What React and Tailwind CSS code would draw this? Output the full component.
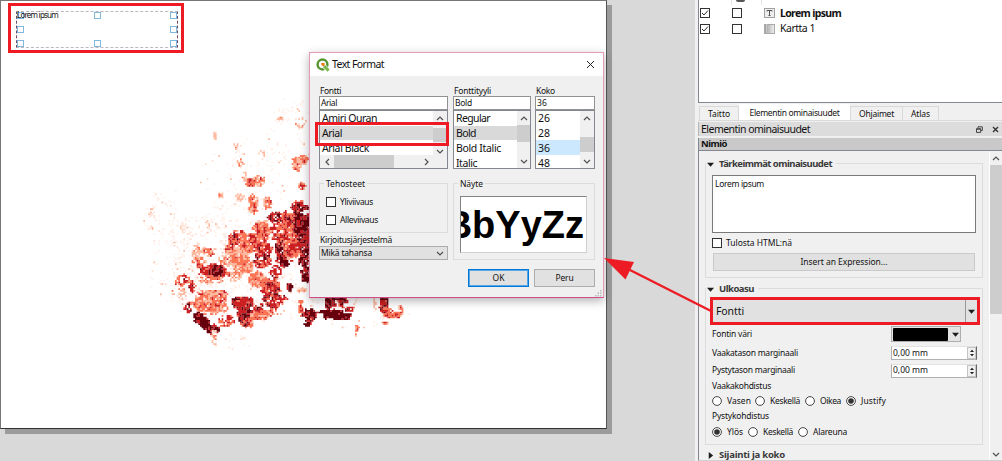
import { useLayoutEffect, useRef, useState } from "react";

// Text run whose tracking is adjusted so that it spans `w` pixels.
function T({ w, className = "", children }) {
  const ref = useRef(null);
  const [ls, setLs] = useState(0);
  useLayoutEffect(() => {
    const n = String(children).length;
    const natural = ref.current.getBoundingClientRect().width;
    setLs((w - natural) / n);
  }, []);
  return (
    <span ref={ref} className={"inline-block whitespace-pre " + className} style={{ letterSpacing: ls + "px" }}>
      {children}
    </span>
  );
}

// [cx, cy, rx, ry, density, darkness, tilt]
const CLUSTERS = [
  [298, 109, 2, 2, 0.6, 2], [280, 119, 2, 2, 0.9, 2], [300, 123, 5, 6, 0.45, 2], [215, 136, 1, 5, 1, 2],
  [236, 147, 2, 3, 0.8, 2], [262, 154, 3, 4, 0.6, 2], [240, 163, 4, 4, 0.7, 2.8], [302, 160, 8, 4, 1, 2.8],
  [297, 166, 4, 5, 0.9, 2.9], [252, 183, 6, 4, 1, 3.6], [259, 181, 5, 5, 0.8, 2.6], [245, 177, 2, 4, 0.7, 2.5],
  [302, 186, 3, 3, 0.9, 3.3], [253, 204, 4, 11, 0.9, 3.1], [268, 202, 3, 7, 0.9, 3.1], [240, 197, 5, 3, 0.7, 2],
  [221, 196, 2, 3, 0.8, 2], [300, 207, 8, 5, 0.85, 4.6], [298, 221, 6, 11, 0.95, 5], [307, 225, 4, 12, 0.9, 4.6],
  [277, 217, 8, 5, 0.85, 4.6], [288, 220, 6, 8, 0.85, 3.8], [262, 229, 8, 8, 0.97, 3], [251, 237, 6, 4, 0.8, 3.5],
  [237, 236, 8, 5, 0.8, 3.9, -0.5], [152, 213, 3, 3, 0.6, 1.9], [152, 229, 2, 2, 0.7, 2], [183, 229, 1.5, 5, 0.6, 1.6],
  [207, 225, 2, 2, 0.7, 2], [235, 245, 12, 6, 0.8, 3.5, -0.8], [253, 243, 16, 7, 0.9, 3.4, -0.5],
  [282, 250, 6, 16, 0.9, 4.7], [293, 245, 9, 14, 0.9, 3.5], [280, 232, 8, 10, 0.75, 3.8], [303, 230, 7, 14, 0.9, 4.9],
  [306, 245, 6, 13, 0.9, 4.7], [233, 257, 13, 7, 0.85, 2.7, -0.4], [243, 265, 11, 8, 0.9, 3], [240, 256, 9, 5, 0.85, 2.4],
  [263, 260, 8, 7, 0.85, 4.1], [263, 248, 9, 5, 0.85, 3.8], [197, 252, 4, 8, 0.8, 2.1], [208, 252, 9, 3, 0.7, 3],
  [200, 263, 7, 5, 0.8, 3], [213, 272, 12, 7, 0.95, 4.1], [217, 271, 7, 6, 0.95, 4.8], [212, 280, 11, 4, 0.6, 3],
  [234, 276, 7, 5, 0.8, 2.8], [182, 280, 6, 5, 0.8, 3.9, -0.6], [192, 287, 3, 5, 0.8, 4], [178, 292, 9, 3, 0.6, 2.3],
  [257, 280, 7, 8, 0.95, 3.1], [270, 287, 10, 9, 0.9, 3.9], [276, 273, 5, 6, 0.85, 4.4], [285, 263, 4, 3, 0.95, 5],
  [303, 260, 5, 5, 0.85, 4.8], [306, 274, 4, 8, 0.9, 5], [290, 287, 3, 3, 0.95, 5], [283, 299, 4, 4, 0.7, 4],
  [302, 290, 4, 2, 0.9, 2], [213, 294, 12, 4, 0.9, 3.7], [212, 302, 16, 11, 0.92, 3], [202, 304, 12, 3, 0.8, 3.3],
  [188, 307, 3, 5, 0.8, 4.2], [183, 299, 5, 6, 0.5, 1.9], [242, 302, 10, 6, 0.95, 4.4], [245, 316, 7, 9, 0.95, 4.7],
  [248, 323, 6, 4, 0.8, 3.5], [265, 309, 15, 5, 0.85, 4, -0.3], [262, 315, 14, 4, 0.9, 3.2, -0.2],
  [271, 298, 9, 6, 0.8, 4], [202, 321, 10, 5, 0.98, 5.2, 0.9], [212, 329, 6, 4, 0.95, 5], [227, 321, 7, 5, 0.85, 3.7],
  [215, 338, 3, 7, 0.7, 2.1], [233, 345, 15, 9, 0.25, 0.6], [301, 308, 2, 9, 0.9, 3.6], [310, 315, 7, 5, 0.98, 5],
  [308, 322, 4, 3, 0.9, 4.8], [330, 302, 5, 7, 0.98, 5.1], [335, 315, 14, 4.5, 0.97, 5.2, 0.1], [343, 302, 5, 5, 0.85, 4.2],
  [350, 309, 5, 2, 0.8, 4], [384, 303, 4, 9, 0.95, 4.4], [387, 312, 4, 4, 0.95, 4], [394, 315, 8, 3, 0.9, 3.4],
  [401, 310, 2, 6, 0.7, 2.8], [374, 303, 2, 4, 0.8, 2.2], [357, 330, 2, 5, 0.7, 2.5], [385, 323, 3, 1, 0.9, 3],
];
const HALOS = [
  [250, 200, 60, 60, 0.03], [165, 240, 25, 55, 0.045], [290, 130, 25, 35, 0.07], [245, 160, 35, 22, 0.04],
  [160, 215, 20, 20, 0.06], [240, 260, 75, 65, 0.1], [345, 312, 65, 18, 0.04], [195, 265, 50, 50, 0.06],
];
const SHADES = ["#fff1eb", "#fee0d4", "#fcbba1", "#fb7555", "#cb1f22", "#67000d"];
const CELL = 1.6667;

function noise(a, b) {
  const s = Math.sin(a * 127.1 + b * 311.7) * 43758.5453;
  return s - Math.floor(s);
}

function buildCells() {
  const cells = new Map();
  const place = (cx, cy, rx, ry, fn) => {
    const r = Math.max(rx, ry);
    for (let i = Math.floor((cx - r) / CELL); i <= (cx + r) / CELL; i++) {
      for (let j = Math.floor((cy - r) / CELL); j <= (cy + r) / CELL; j++) fn(i, j);
    }
  };
  HALOS.forEach(([cx, cy, rx, ry, d], k) =>
    place(cx, cy, rx, ry, (i, j) => {
      const u = (i * CELL - cx) / rx, v = (j * CELL - cy) / ry;
      const patch = noise((i >> 2) + 7, (j >> 2) + k * 5);
      if (u * u + v * v < 1 && noise(i + k * 31, j) < d * (patch > 0.72 ? 3.2 : 0.25))
        cells.set(i + "," + j, noise(j, i) < 0.78 ? 0 : 1 + (noise(i, j + 9) > 0.6 ? 1 : 0));
    })
  );
  CLUSTERS.forEach(([cx, cy, rx, ry, d, dark, tilt = 0], k) =>
    place(cx, cy, rx + 2, ry + 2, (i, j) => {
      const x = (i + 0.5) * CELL - cx, y = (j + 0.5) * CELL - cy;
      const u = (x * Math.cos(tilt) + y * Math.sin(tilt)) / (rx + 0.7);
      const v = (-x * Math.sin(tilt) + y * Math.cos(tilt)) / (ry + 0.7);
      const q = u * u + v * v;
      if (q > 0.6 + noise((i >> 1) + k, j >> 1) * 0.85) return;
      if (noise(i + k, j + 3) > d + 0.04 || noise((i >> 1) + 50, j >> 1) > d + 0.1) return;
      const n = dark + (noise(i, j) - 0.5) * 1.2 + (noise(i >> 1, (j >> 1) + 4) - 0.5) * 1.3 - q * 0.4;
      cells.set(i + "," + j, Math.max(0, Math.min(5, Math.round(n))));
    })
  );
  const paths = SHADES.map(() => "");
  cells.forEach((s, key) => {
    const [i, j] = key.split(",").map(Number);
    paths[s] += `M${(i * CELL).toFixed(2)} ${(j * CELL).toFixed(2)}h1.68v1.68h-1.68z`;
  });
  return paths;
}
const PATHS = buildCells();

function HeatMap() {
  return (
    <svg className="block" width="605" height="426" viewBox="1 1 605 426">
      {PATHS.map((d, i) => <path key={i} d={d} fill={SHADES[i]} />)}
    </svg>
  );
}

const Chevron = ({ dir, className = "" }) => {
  const d = { up: "M1 6L4 3L7 6", down: "M1 3L4 6L7 3", left: "M6 1L3 4L6 7", right: "M3 1L6 4L3 7" }[dir];
  return (
    <svg width="8" height="8" viewBox="0 0 8 8" className={"shrink-0 " + className}>
      <path d={d} fill="none" stroke="#505050" strokeWidth="1.2" />
    </svg>
  );
};

const Check = ({ on }) => (
  <span className="flex h-[10px] w-[10px] shrink-0 items-center justify-center border border-[#333] bg-white">
    {on && <svg width="8" height="8" viewBox="0 0 8 8"><path d="M1 4L3 6L7 1.5" fill="none" stroke="#333" strokeWidth="1" /></svg>}
  </span>
);

const Radio = ({ on, w, label, className }) => (
  <span className={"flex items-center gap-[5px] " + className}>
    <svg width="10" height="10" viewBox="0 0 10 10" className="shrink-0">
      <circle cx="5" cy="5" r="4.4" fill="#fff" stroke="#333" strokeWidth="0.9" />
      {on && <circle cx="5" cy="5" r="2.8" fill="#333" />}
    </svg>
    <T w={w}>{label}</T>
  </span>
);

const Tri = ({ dir = "down", size = 7 }) => (
  <svg width={size} height={size} viewBox="0 0 8 8" className="shrink-0">
    <path d={dir === "down" ? "M0 2H8L4 6.5Z" : dir === "up" ? "M0 6H8L4 1.5Z" : "M2 0L7 4L2 8Z"} fill="#1c1c1c" />
  </svg>
);

const Spin = () => (
  <div className="flex h-[14px] w-[86px] items-center border border-[#b0b0b0] border-t-[#e2e2e2] border-r-[#666] bg-white pl-px">
    <T w={35}>0,00 mm</T>
    <span className="ml-auto flex h-full w-[9px] flex-col items-center justify-between border border-[#c4c4c4] bg-[#f0f0f0] py-px">
      <Tri dir="up" size={4} />
      <Tri size={4} />
    </span>
  </div>
);

function Selection() {
  const row = "flex justify-between";
  const h = "h-[7px] w-[7px] border border-[#7fb9de] bg-white";
  return (
    <div className="absolute left-[8px] top-[3px] h-[50px] w-[176px] border-[3px] border-[#ed1c24]">
      <div className="relative ml-[5px] mt-[5px] flex h-[37px] w-[162px] flex-col justify-between border border-dashed border-x-[#6d4a68] border-y-[#bdb6c0]">
        <div className={row}><i className={h} /><i className={h} /><i className={h} /></div>
        <div className={row}><i className={h} /><i className={h} /></div>
        <div className={row}><i className={h} /><i className={h} /><i className={h} /></div>
        <span className="absolute left-0 top-[-3px] text-[8px] leading-[12px]"><T w={41}>Lorem ipsum</T></span>
      </div>
    </div>
  );
}

function ListRow({ w, children, className = "" }) {
  return <div className={"flex h-[14.7px] shrink-0 items-center pl-[2px] pt-[2px] text-[10.5px] " + className}><T w={w}>{children}</T></div>;
}

function Column({ label, lw, value, vw, className, children }) {
  return (
    <div className={"flex flex-col " + className}>
      <div className="flex h-[11px] items-center pl-px pt-[2px]"><T w={lw}>{label}</T></div>
      <div className="flex h-[14px] items-center border border-[#929292] bg-white pl-px pt-px"><T w={vw}>{value}</T></div>
      <div className="flex h-[59px] overflow-hidden border border-[#828790] bg-white">{children}</div>
    </div>
  );
}

const Group = ({ title, w, className, children }) => (
  <fieldset className={"border border-[#dcdcdc] " + className}>
    <legend className="ml-[4px] h-[11px] px-[2px] leading-[11px]"><T w={w}>{title}</T></legend>
    {children}
  </fieldset>
);

function Dialog() {
  return (
    <div className="absolute left-[309px] top-[52px] flex h-[246px] w-[295px] flex-col border border-[#e59ab9] border-b-[#d04a87] bg-[#f0f0f0] text-[8.5px] shadow-[0_3px_9px_rgba(0,0,0,0.3)]">
      <div className="flex h-[23px] shrink-0 items-center bg-white pl-[6px] pr-[8px]">
        <svg width="14" height="14" viewBox="0 0 14 14">
          <circle cx="6.5" cy="6.5" r="4.9" fill="none" stroke="#589632" strokeWidth="2.5" />
          <path d="M6.8 6.8L12.7 12.9" stroke="#fff" strokeWidth="4.2" />
          <path d="M8 8L12.6 12.6" stroke="#7bb84a" strokeWidth="3" />
          <path d="M5.3 5h3.3v2.3l-1.3 1.1L5.3 6.8z" fill="#ee7913" />
        </svg>
        <T w={52} className="ml-[2px] text-[10.5px]">Text Format</T>
        <svg className="ml-auto" width="9" height="9" viewBox="0 0 9 9"><path d="M1 1L8 8M8 1L1 8" stroke="#222" strokeWidth="1" /></svg>
      </div>
      <div className="flex pl-[9px] pt-[9px]">
        <Column label="Fontti" lw={21} value="Arial" vw={16} className="w-[129px]">
          <div className="flex w-full flex-col">
            <div className="flex h-[44px] overflow-hidden">
              <div className="flex flex-1 flex-col">
                <ListRow w={55}>Amiri Quran</ListRow>
                <ListRow w={20} className="bg-[#d9d9d9]">Arial</ListRow>
                <ListRow w={47}>Arial Black</ListRow>
              </div>
              <div className="flex w-[14px] flex-col items-center justify-between bg-[#f0f0f0]">
                <Chevron dir="up" className="mt-[3px]" />
                <span className="h-[14px] w-full bg-[#cdcdcd]" />
                <Chevron dir="down" />
              </div>
            </div>
            <div className="flex flex-1 items-center bg-[#f0f0f0] pl-[3px]">
              <Chevron dir="left" />
              <span className="ml-[3px] h-full w-[60px] bg-[#cdcdcd]" />
              <Chevron dir="right" className="ml-[28px]" />
            </div>
          </div>
        </Column>
        <Column label="Fonttityyli" lw={37} value="Bold" vw={17} className="ml-[5px] w-[78px]">
          <div className="flex flex-1 flex-col">
            <ListRow w={34}>Regular</ListRow>
            <ListRow w={20} className="bg-[#d9d9d9]">Bold</ListRow>
            <ListRow w={45}>Bold Italic</ListRow>
            <ListRow w={21}>Italic</ListRow>
          </div>
          <div className="flex w-[13px] flex-col items-center bg-[#f0f0f0]">
            <Chevron dir="up" className="mt-[3px]" />
            <span className="mt-[3px] h-[17px] w-full bg-[#cdcdcd]" />
            <Chevron dir="down" className="mb-[3px] mt-auto" />
          </div>
        </Column>
        <Column label="Koko" lw={19} value="36" vw={10} className="ml-[4px] w-[60px]">
          <div className="flex flex-1 flex-col">
            <ListRow w={12}>26</ListRow>
            <ListRow w={12}>28</ListRow>
            <ListRow w={12} className="bg-[#cce8ff]">36</ListRow>
            <ListRow w={12}>48</ListRow>
          </div>
          <div className="flex w-[14px] flex-col items-center bg-[#f0f0f0]">
            <Chevron dir="up" className="mt-[3px]" />
            <span className="mt-[15px] h-[15px] w-full bg-[#cdcdcd]" />
            <Chevron dir="down" className="mb-[3px] mt-auto" />
          </div>
        </Column>
      </div>
      <div className="flex pl-[9px] pt-[9px]">
        <div className="w-[129px]">
          <Group title="Tehosteet" w={39} className="h-[55px]">
            <div className="ml-[6px] mt-[8px] flex h-[10px] items-center gap-[4px]"><Check /><T w={33} className="mt-px">Yliviivaus</T></div>
            <div className="ml-[6px] mt-[8px] flex h-[10px] items-center gap-[4px]"><Check /><T w={38} className="mt-px">Alleviivaus</T></div>
          </Group>
          <div className="flex h-[13px] items-center pl-px pt-[2px]"><T w={72}>Kirjoitusjärjestelmä</T></div>
          <div className="flex h-[14px] items-center justify-between border border-[#adadad] bg-[#e1e1e1] pl-[1px] pr-[3px]">
            <T w={51}>Mikä tahansa</T>
            <Chevron dir="down" />
          </div>
        </div>
        <Group title="Näyte" w={23} className="ml-[5px] h-[82px] w-[142px]">
          <div className="ml-[6px] mt-[7px] flex h-[57px] w-[127px] items-center justify-end overflow-hidden border border-[#d0d0d0] border-l-[#828282] border-t-[#828282] bg-white pr-[2px] text-[38px] font-bold leading-none text-black [font-family:'Liberation_Sans',Arial,sans-serif]">
            BbYyZz
          </div>
        </Group>
      </div>
      <div className="mt-[9px] flex gap-[5px] pl-[158px]">
        <div className="flex h-[18px] w-[61px] items-center justify-center border border-[#0078d7] bg-[#e1e1e1] pt-px outline-1 -outline-offset-2 outline-[#55a7e8]"><T w={12}>OK</T></div>
        <div className="flex h-[18px] w-[61px] items-center justify-center border border-[#adadad] bg-[#e1e1e1] pt-px"><T w={18}>Peru</T></div>
      </div>
      <svg className="ml-auto mr-[1px] mt-auto" width="7" height="7" viewBox="0 0 7 7">
        <path d="M5 0h1.5v1.5H5zM2.5 2.5H4V4H2.5zM5 2.5h1.5V4H5zM0 5h1.5v1.5H0zM2.5 5H4v1.5H2.5zM5 5h1.5v1.5H5z" fill="#b8b8b8" />
      </svg>
      <div className="absolute left-[5px] top-[69px] h-[24px] w-[134px] border-[3px] border-[#ed1c24]" />
    </div>
  );
}

function Items() {
  return (
    <div className="h-[103px] shrink-0 border-b border-l border-[#828790] bg-white text-[10.5px]">
      <div className="flex h-[5px] items-start pl-[32px]">
        <div className="flex h-full w-[31px] justify-center border-x border-[#e5e5e5]"><span className="mr-[12px] h-[2px] w-[9px] rounded-b bg-[#555]" /></div>
      </div>
      <div className="flex h-[16px] items-center pl-[1px]">
        <Check on /><span className="w-[22px]" /><Check />
        <svg className="ml-[22px]" width="11" height="10" viewBox="0 0 11 10">
          <rect x=".5" y=".5" width="10" height="9" fill="#eee" stroke="#a0a0a0" />
          <path d="M3 3.5V2.5H8V3.5M5.5 2.5V7.5M4.5 7.5H6.5" fill="none" stroke="#555" />
        </svg>
        <T w={61} className="ml-[5px] mt-px font-bold">Lorem ipsum</T>
      </div>
      <div className="flex h-[16px] items-center pl-[1px]">
        <Check on /><span className="w-[22px]" /><Check />
        <svg className="ml-[22px]" width="11" height="10" viewBox="0 0 11 10">
          <defs><linearGradient id="sheet"><stop stopColor="#999" /><stop offset="1" stopColor="#f2f2f2" /></linearGradient></defs>
          <rect x=".5" y=".5" width="10" height="9" fill="url(#sheet)" stroke="#aaa" />
          <path d="M2.5 0V9" stroke="#c9c9c9" />
        </svg>
        <T w={35} className="ml-[5px]">Kartta 1</T>
      </div>
    </div>
  );
}

const Heading = ({ dir, w, children }) => (
  <div className="flex h-[14px] items-center">
    <span className="flex items-center gap-[5px] bg-[#f0f0f0] pl-[1px] pr-[4px]">
      <Tri dir={dir} size={7} />
      <T w={w} className="text-[9.5px] font-bold text-[#3a3a3a]">{children}</T>
    </span>
  </div>
);

function Properties() {
  return (
    <div className="flex h-[310px] overflow-hidden border-b border-l border-b-[#d0d0d0] border-l-[#828790] pl-[6px]">
      <div className="w-[278px]">
        <div className="mt-[12px] h-[115px] border border-[#dcdcdc]">
          <div className="-mt-[7px]"><Heading w={113}>Tärkeimmät ominaisuudet</Heading></div>
          <div className="ml-[6px] mt-[4px] h-[58px] w-[264px] border border-[#7a7a7a] bg-white pl-[2px] pt-[2px] leading-[12px]"><T w={49}>Lorem ipsum</T></div>
          <div className="ml-[6px] mt-[5px] flex h-[10px] items-center gap-[4px]"><Check /><T w={66}>Tulosta HTML:nä</T></div>
          <div className="ml-[7px] mt-[5px] flex h-[18px] w-[262px] items-center justify-center border border-[#cacaca] bg-[#e1e1e1]"><T w={87}>Insert an Expression...</T></div>
        </div>
        <div className="mt-[10px] h-[157px] border border-[#dcdcdc]">
          <div className="-mt-[7px]"><Heading w={35}>Ulkoasu</Heading></div>
          <div className="ml-[4px] mt-px flex h-[28px] w-[270px] items-stretch border-[3px] border-[#ed1c24] bg-[#e1e1e1] pl-[3px] text-[10.5px]">
            <T w={28} className="mt-px self-center">Fontti</T>
            <span className="ml-auto flex w-[12px] items-center justify-center border-l border-[#999]"><Tri size={7} /></span>
          </div>
          <div className="ml-[6px] mt-px flex h-[16px] items-center">
            <T w={40}>Fontin väri</T>
            <div className="ml-auto mr-[21px] flex h-[16px] w-[70px] items-center border border-[#adadad] bg-[#e4e4e4] pl-[1px]">
              <span className="h-[13px] w-[55px] rounded-[1px] bg-black" />
              <span className="ml-[4px]"><Tri size={7} /></span>
            </div>
          </div>
          <div className="ml-[6px] mr-[5px] mt-[2px] flex h-[18px] items-center justify-between"><T w={86}>Vaakatason marginaali</T><Spin /></div>
          <div className="ml-[6px] mr-[5px] flex h-[17px] items-center justify-between"><T w={83}>Pystytason marginaali</T><Spin /></div>
          <div className="ml-[6px] flex h-[14px] items-center"><T w={59}>Vaakakohdistus</T></div>
          <div className="ml-[6px] flex h-[16px] items-center">
            <Radio w={24} label="Vasen" className="w-[43px]" />
            <Radio w={30} label="Keskellä" className="w-[50px]" />
            <Radio w={21} label="Oikea" className="w-[41px]" />
            <Radio on w={25} label="Justify" className="w-[45px]" />
          </div>
          <div className="ml-[6px] flex h-[15px] items-center"><T w={57}>Pystykohdistus</T></div>
          <div className="ml-[6px] flex h-[16px] items-center">
            <Radio on w={16} label="Ylös" className="w-[36px]" />
            <Radio w={30} label="Keskellä" className="w-[50px]" />
            <Radio w={34} label="Alareuna" className="w-[60px]" />
          </div>
        </div>
        <div className="mt-[3px] pl-px"><Heading dir="right" w={66}>Sijainti ja koko</Heading></div>
      </div>
      <div className="ml-auto flex w-[13px] flex-col items-center border-l border-white bg-[#f0f0f0]">
        <Chevron dir="up" className="mb-[3px] mt-[3px]" />
        <span className="h-[149px] w-full bg-[#cdcdcd]" />
        <Chevron dir="down" className="mb-[2px] mt-auto" />
      </div>
    </div>
  );
}

function SidePanel() {
  const tab = "flex h-[14px] items-center justify-center border border-b-0 border-[#d9d9d9] pt-[2px]";
  return (
    <div className="flex h-[461px] w-[304px] shrink-0 flex-col bg-[#f0f0f0] text-[8.5px]">
      <Items />
      <div className="flex h-[18px] shrink-0 items-end border-b border-[#dadada] pl-px">
        <div className={tab + " w-[40px]"}><T w={22}>Taitto</T></div>
        <div className="flex h-[16px] w-[111px] items-center justify-center bg-white pt-[2px]"><T w={90}>Elementin ominaisuudet</T></div>
        <div className={tab + " w-[53px]"}><T w={35}>Ohjaimet</T></div>
        <div className={tab + " w-[36px] border-l-0"}><T w={19}>Atlas</T></div>
      </div>
      <div className="mt-px flex h-[14px] shrink-0 items-center border-l border-[#b5b5b5] bg-[#dcdcdc] pl-[2px] pr-[3px]">
        <T w={109} className="mt-[2px] text-[10.5px]">Elementin ominaisuudet</T>
        <svg className="ml-auto" width="7" height="7" viewBox="0 0 7 7"><path d="M2 2V.8H6.3V4.5H5M.5 2.7H4.7V6.4H.5zM.5 3.2H4.7" fill="none" stroke="#444" strokeWidth="1" /></svg>
        <svg className="ml-[9px]" width="7" height="7" viewBox="0 0 7 7"><path d="M1 1L6 6M6 1L1 6" stroke="#333" strokeWidth="1.4" /></svg>
      </div>
      <div className="mt-[2px] flex h-[13px] shrink-0 items-center border-b border-l border-[#828790] bg-[#c9c9c9] pl-[2px] pt-px">
        <T w={26} className="text-[9.5px] font-bold">Nimiö</T>
      </div>
      <Properties />
    </div>
  );
}

export default function App() {
  return (
    <div className="relative flex h-[461px] w-[1002px] overflow-hidden bg-[#d9d9d9] text-[#111] [font-family:'Noto_Sans','Open_Sans',sans-serif]">
      <div className="h-[461px] w-[695px] shrink-0">
        <div className="h-[429px] w-[607px] border border-l-[#777] border-t-[#777] border-b-[#333] border-r-[#555] bg-white shadow-[5px_5px_0_#9b9b9b]">
          <HeatMap />
        </div>
      </div>
      <div className="w-[3px] shrink-0 bg-[#f0f0f0]" />
      <SidePanel />
      <Selection />
      <Dialog />
      <svg className="pointer-events-none absolute left-0 top-0" width="1002" height="461" viewBox="0 0 1002 461">
        <path d="M711 311L628 269" stroke="#ed1c24" strokeWidth="2.4" />
        <path d="M604 258L634 262L625.5 279.5Z" fill="#ed1c24" />
      </svg>
    </div>
  );
}
